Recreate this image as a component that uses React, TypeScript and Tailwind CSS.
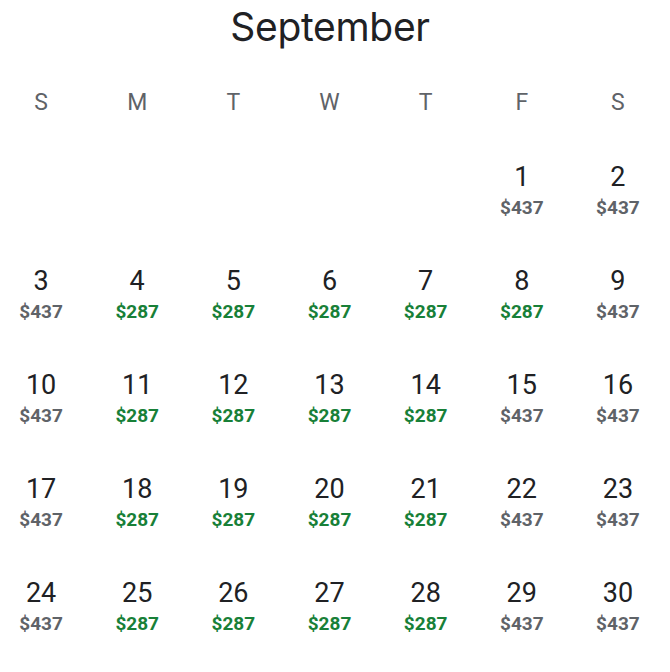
import React from "react";

type Cell = { d: number; p: number } | null;

const green = new Set([4, 5, 6, 7, 8, 11, 12, 13, 14, 18, 19, 20, 21, 25, 26, 27, 28]);

const weeks: Cell[][] = (() => {
  const cells: Cell[] = [null, null, null, null, null];
  for (let d = 1; d <= 30; d++) cells.push({ d, p: green.has(d) ? 287 : 437 });
  const out: Cell[][] = [];
  for (let i = 0; i < cells.length; i += 7) out.push(cells.slice(i, i + 7));
  return out;
})();

const heads = ["S", "M", "T", "W", "T", "F", "S"];

export default function App() {
  return (
    <div className="w-[670px] h-[672px] bg-white overflow-hidden" style={{ fontFamily: "Roboto, 'Liberation Sans', sans-serif" }}>
      <div className="h-[54px] pr-[10px] flex items-center justify-center text-[39px] text-[#202124] tracking-[-0.3px]" style={{ fontFamily: "Inter, 'Open Sans', sans-serif" }}>
        September
      </div>
      <div className="ml-[-7px] w-[673px]">
        <div className="grid grid-cols-7 h-[40px] mt-[29px] mb-[2px] items-center">
          {heads.map((h, i) => (
            <div key={i} className="text-center text-[23px] leading-[40px] text-[#5f6368]">
              {h}
            </div>
          ))}
        </div>
        {weeks.map((w, wi) => (
          <div key={wi} className="grid grid-cols-7 h-[104px]">
            {w.map((c, ci) => (
              <div key={ci} className="flex flex-col items-center pt-[36px]">
                {c && (
                  <>
                    <div className="text-[27px] leading-[32px] text-[#202124]">{c.d}</div>
                    <div
                      className={
                        "mt-[4px] text-[19px] leading-[22px] font-bold " +
                        (c.p === 287 ? "text-[#188038]" : "text-[#5f6368]")
                      }
                    >
                      ${c.p}
                    </div>
                  </>
                )}
              </div>
            ))}
          </div>
        ))}
      </div>
    </div>
  );
}
